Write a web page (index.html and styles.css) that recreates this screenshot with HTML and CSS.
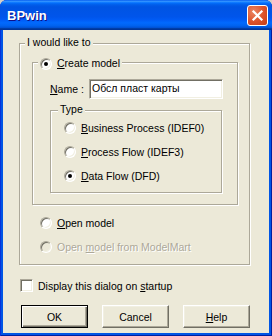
FILE: index.html
```html
<!DOCTYPE html>
<html lang="en">
  <head>
    <meta charset="UTF-8" />
    <title>BPwin</title>
    <link rel="stylesheet" href="styles.css">
  </head>
  <body>
    <div class="window">
      <div class="titlebar">
        <span class="title">BPwin</span>
        <div class="close">
          <svg width="19" height="19" viewBox="0 0 19 19">
            <path d="M5.5 5.5 L13.5 13.5 M13.5 5.5 L5.5 13.5" stroke="#fff" stroke-width="2.2" stroke-linecap="square" />
          </svg>
        </div>
      </div>

      <div class="client">
        <div class="group outer">
          <span class="legend legend-outer">I would like to</span>

          <div class="group create">
            <div class="legend legend-create">
              <span class="radio checked"></span>
              <span><u>C</u>reate model</span>
            </div>
            <div class="name-row">
              <span class="name-label"><u>N</u>ame :</span>
              <div class="edit">Обсл пласт карты</div>
            </div>
            <div class="group type">
              <span class="legend legend-type">Type</span>
              <div class="option">
                <span class="radio"></span>
                <span><u>B</u>usiness Process (IDEF0)</span>
              </div>
              <div class="option">
                <span class="radio"></span>
                <span><u>P</u>rocess Flow (IDEF3)</span>
              </div>
              <div class="option">
                <span class="radio checked"></span>
                <span><u>D</u>ata Flow (DFD)</span>
              </div>
            </div>
          </div>

          <div class="option top-option first">
            <span class="radio"></span>
            <span><u>O</u>pen model</span>
          </div>
          <div class="option top-option disabled">
            <span class="radio"></span>
            <span>Open <u>m</u>odel from ModelMart</span>
          </div>
        </div>

        <div class="startup">
          <span class="check"></span>
          <span>Display this dialog on <u>s</u>tartup</span>
        </div>

        <div class="buttons">
          <button class="btn default">OK</button>
          <button class="btn">Cancel</button>
          <button class="btn"><u>H</u>elp</button>
        </div>
      </div>
    </div>
  </body>
</html>
```

FILE: styles.css
```css
* {
  box-sizing: border-box;
}

body {
  margin: 0;
  background: #d4d0c8;
  font-family: "Liberation Sans", Arial, sans-serif;
  font-size: 10.5px;
  color: #000;
}

.window {
  width: 272px;
  height: 336px;
  display: flex;
  flex-direction: column;
  background: #0055e5;
  border-radius: 7px 7px 0 0;
  overflow: hidden;
  box-shadow: inset 1px 0 #0831d9, inset -1px 0 #001ea0, inset 0 -1px #001ea0;
}

.titlebar {
  flex: none;
  height: 30px;
  display: flex;
  align-items: center;
  justify-content: space-between;
  padding: 0 4px 0 7px;
  background: linear-gradient(to bottom, #0058ee 0%, #3593ff 4%, #288eff 6%, #127dff 8%, #036ffc 10%, #0262ee 14%, #0057e5 20%, #0054e3 24%, #0055eb 56%, #005bf5 66%, #026afe 76%, #0062ef 86%, #0052d6 92%, #0040ab 94%, #003092 100%);
}

.title {
  color: #fff;
  font-weight: bold;
  font-size: 13px;
  text-shadow: 1px 1px #0f1089;
}

.close {
  width: 21px;
  height: 21px;
  display: flex;
  align-items: center;
  justify-content: center;
  border: 1px solid #fff;
  border-radius: 3px;
  background: radial-gradient(circle at 30% 30%, #ea8563 0%, #dc5128 55%, #c63d16 100%);
}

.client {
  flex: 1;
  margin: 0 3px 3px;
  background: #ece9d8;
  padding: 13px 0 0 16px;
}

.group {
  position: relative;
  border: 1px solid #aca899;
  box-shadow: 1px 1px 0 #fff, inset 1px 1px 0 #fff;
}

.legend {
  position: absolute;
  background: #ece9d8;
  padding: 0 2px;
  line-height: 13px;
  white-space: nowrap;
}

.outer {
  width: 231px;
  height: 222px;
}

.legend-outer {
  left: 5px;
  top: -8px;
}

.create {
  width: 206px;
  height: 143px;
  margin: 18px 0 0 12px;
  padding: 16px 0 0 17px;
}

.legend-create {
  left: 5px;
  top: -6px;
  display: flex;
  align-items: center;
  gap: 5px;
}

.name-row {
  display: flex;
  align-items: center;
  height: 20px;
}

.name-label {
  width: 39px;
}

.edit {
  width: 134px;
  height: 20px;
  padding: 0 2px;
  line-height: 16px;
  background: #fff;
  border: 1px solid;
  border-color: #aca899 #fff #fff #aca899;
  box-shadow: inset 1px 1px 0 #716f64, inset -1px -1px 0 #f1efe2;
}

.type {
  width: 172px;
  height: 83px;
  margin-top: 11px;
  padding: 5px 0 0 13px;
}

.legend-type {
  left: 7px;
  top: -8px;
}

.option {
  display: flex;
  align-items: center;
  gap: 5px;
  height: 24px;
}

.top-option {
  margin-left: 20px;
}

.top-option.first {
  margin-top: 6px;
}

.radio {
  position: relative;
  flex: none;
  width: 12px;
  height: 12px;
  border-radius: 50%;
  background: #fff;
  border: 1px solid;
  border-color: #aca899 #fff #fff #aca899;
  box-shadow: inset 1px 1px 0 #716f64, inset -1px -1px 0 #f1efe2;
}

.radio.checked::after {
  content: "";
  position: absolute;
  left: 3px;
  top: 3px;
  width: 4px;
  height: 4px;
  border-radius: 50%;
  background: #000;
}

.disabled {
  color: #aca899;
  text-shadow: 1px 1px 0 #fff;
}

.disabled .radio {
  background: #ece9d8;
}

.startup {
  display: flex;
  align-items: center;
  gap: 5px;
  height: 13px;
  margin: 14px 0 0 1px;
}

.check {
  flex: none;
  width: 13px;
  height: 13px;
  background: #fff;
  border: 1px solid;
  border-color: #aca899 #fff #fff #aca899;
  box-shadow: inset 1px 1px 0 #716f64, inset -1px -1px 0 #f1efe2;
}

.buttons {
  display: flex;
  gap: 14px;
  margin: 13px 0 0 2px;
}

.btn {
  width: 67px;
  height: 23px;
  padding: 0;
  font: inherit;
  color: #000;
  background: #ece9d8;
  border: 1px solid;
  border-color: #fff #716f64 #716f64 #fff;
  box-shadow: inset -1px -1px 0 #aca899, inset 1px 1px 0 #f1efe2;
}

.btn.default {
  border-color: #000;
  box-shadow: inset 1px 1px 0 #fff, inset -1px -1px 0 #716f64, inset -2px -2px 0 #aca899;
}
```
